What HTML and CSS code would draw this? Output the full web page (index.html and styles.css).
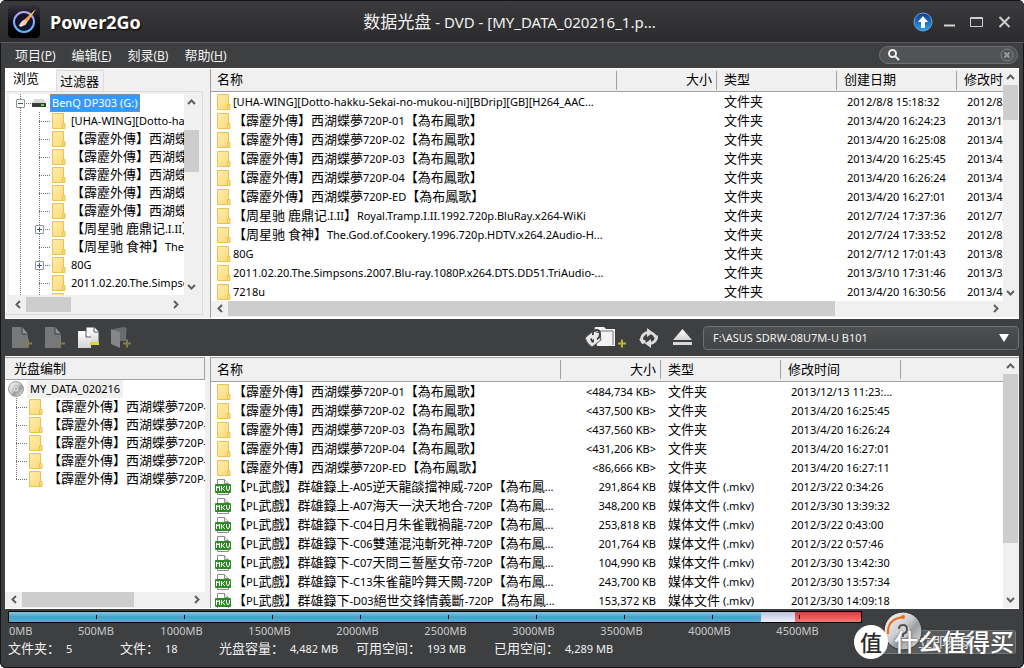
FILE: index.html
```html
<!DOCTYPE html>
<html lang="zh-CN">
<head>
<meta charset="utf-8">
<title>Power2Go</title>
<link rel="stylesheet" href="styles.css">
</head>
<body>
<svg class="defs" aria-hidden="true">
  <defs>
    <linearGradient id="g-folder" x1="0" y1="0" x2="1" y2="1"><stop offset="0" stop-color="#ffeeb0"/><stop offset="1" stop-color="#fbd873"/></linearGradient>
    <linearGradient id="g-page" x1="0" y1="0" x2="0" y2="1"><stop offset="0" stop-color="#fff"/><stop offset="1" stop-color="#d4d4d4"/></linearGradient>
    <linearGradient id="g-steel" x1="0" y1="0" x2="1" y2="1"><stop offset="0" stop-color="#fff"/><stop offset=".45" stop-color="#c9cbcd"/><stop offset=".6" stop-color="#9a9c9f"/><stop offset="1" stop-color="#f0f0f0"/></linearGradient>
    <linearGradient id="g-up" x1="0" y1="0" x2="0" y2="1"><stop offset="0" stop-color="#123f86"/><stop offset="1" stop-color="#2ba0f4"/></linearGradient>
    <linearGradient id="g-ring" x1="0" y1="0" x2="0" y2="1"><stop offset="0" stop-color="#b7a4e8"/><stop offset="1" stop-color="#58b7ff"/></linearGradient>
    <linearGradient id="g-flame" x1="1" y1="0" x2="0" y2="1"><stop offset="0" stop-color="#ffe66a"/><stop offset=".5" stop-color="#ff9a35"/><stop offset="1" stop-color="#f5e8e0"/></linearGradient>
    <linearGradient id="g-app" x1="0" y1="0" x2="0" y2="1"><stop offset="0" stop-color="#303039"/><stop offset=".6" stop-color="#07070c"/><stop offset="1" stop-color="#000"/></linearGradient>
  </defs>
  <symbol id="folder" viewBox="0 0 14 16"><path d="M.5.5h11v10h1.500v5H.5z" fill="url(#g-folder)" stroke="#e9c34f"/><path d="M10.500 15v-4.500h2.500" fill="none" stroke="#e9c34f"/></symbol>
  <symbol id="mkv" viewBox="0 0 16 16"><path d="M2.500 15.500V.5h7l4 4v11z" fill="#fff" stroke="#8c8c8c"/><path d="M9.500.5v4h4" fill="#eee" stroke="#8c8c8c"/><rect y="5" width="16" height="9" rx="1" fill="#2d8c25"/><path d="M1.500 12V7L3 9l1.500-2v5M6.500 7v5M10 7L7.500 9.500 10 12M11.500 7v3l1.500 2 1.500-2V7" fill="none" stroke="#fff"/></symbol>
  <symbol id="hdd" viewBox="0 0 14 9"><path d="M2.500 0h9L14 4H0z" fill="#d9d9d9"/><path d="M0 4h14v4H0z" fill="#3b3b3b"/><path d="M9 6h3" stroke="#3fe03f" stroke-width="2"/></symbol>
  <symbol id="disc" viewBox="0 0 16 16"><circle cx="8" cy="8" r="7.500" fill="url(#g-steel)" stroke="#9d9fa1"/><circle cx="8" cy="8" r="2.500" fill="#eee" stroke="#b5b5b5"/><circle cx="8" cy="8" r="1" fill="#888"/></symbol>
  <symbol id="up" viewBox="0 0 9 6"><path d="M1 5l3.500-3.500L8 5" fill="none" stroke="#606060" stroke-width="2"/></symbol>
  <symbol id="down" viewBox="0 0 9 6"><path d="M1 1l3.500 3.500L8 1" fill="none" stroke="#606060" stroke-width="2"/></symbol>
  <symbol id="left" viewBox="0 0 6 9"><path d="M5 1L1.500 4.500 5 8" fill="none" stroke="#606060" stroke-width="2"/></symbol>
  <symbol id="right" viewBox="0 0 6 9"><path d="M1 1l3.500 3.500L1 8" fill="none" stroke="#606060" stroke-width="2"/></symbol>
</svg>

<div class="app">
  <header class="titlebar">
    <div class="identity">
      <svg class="logo" viewBox="0 0 32 32"><rect width="32" height="32" rx="4" fill="url(#g-app)"/><circle cx="16" cy="16" r="10" fill="#10142c" stroke="url(#g-ring)" stroke-width="2"/><path d="M28 3L17 13q-5 3-6 7 3 2 6-2 2-1 4-4z" fill="url(#g-flame)"/><circle cx="16" cy="17" r="2" fill="none" stroke="#e9e4ff"/></svg>
      <h1 class="brand">Power2Go</h1>
    </div>
    <div class="doc-title"><span class="doc-han">数据光盘</span> - DVD - [MY_DATA_020216_1.p...</div>
    <div class="win-buttons">
      <button class="bare" aria-label="升级"><svg width="20" height="20" viewBox="0 0 20 20"><circle cx="10" cy="10" r="9" fill="url(#g-up)" stroke="#6ba4dc"/><path d="M10 4l5 6h-3v6H8v-6H5z" fill="#fff"/></svg></button>
      <button class="bare" aria-label="最小化"><svg width="11" height="12" viewBox="0 0 11 12"><path d="M0 9.500h11" stroke="#d0d0d0" stroke-width="2"/></svg></button>
      <button class="bare" aria-label="最大化"><svg width="13" height="12" viewBox="0 0 13 12"><path d="M.5 1.500h12v9H.5zM.5 2.500h12" fill="none" stroke="#d0d0d0"/></svg></button>
      <button class="bare" aria-label="关闭"><svg width="13" height="12" viewBox="0 0 13 12"><path d="M1.500 1l10 10M11.500 1l-10 10" stroke="#d0d0d0" stroke-width="2"/></svg></button>
    </div>
  </header>

  <nav class="menubar">
    <div class="menus">
      <button class="bare">项目<span class="key">(<u>P</u>)</span></button>
      <button class="bare">编辑<span class="key">(<u>E</u>)</span></button>
      <button class="bare">刻录<span class="key">(<u>B</u>)</span></button>
      <button class="bare">帮助<span class="key">(<u>H</u>)</span></button>
    </div>
    <div class="search">
      <svg width="12" height="12" viewBox="0 0 12 12"><circle cx="4.500" cy="4.500" r="3.500" fill="none" stroke="#eee" stroke-width="2"/><path d="M7 7l4 4" stroke="#eee" stroke-width="2"/></svg>
      <input type="text" aria-label="搜索">
      <button class="bare" aria-label="清除"><svg width="14" height="14" viewBox="0 0 14 14"><circle cx="7" cy="7" r="6" fill="none" stroke="#858688"/><path d="M4.500 4.500l5 5M9.500 4.500l-5 5" stroke="#98999b" stroke-width="2"/></svg></button>
    </div>
  </nav>

  <section class="panes">
    <div class="side browse">
      <div class="tabs" role="tablist">
        <button class="tab active" role="tab" aria-selected="true">浏览</button>
        <button class="tab" role="tab" aria-selected="false">过滤器</button>
      </div>
      <div class="tab-page">
        <div class="scroll-row">
          <ul class="tree" id="source-tree"></ul>
          <div class="vbar"><button class="bare" aria-label="向上"><svg width="9" height="6"><use href="#up"/></svg></button><div class="track"><i class="thumb tree-v"></i></div><button class="bare" aria-label="向下"><svg width="9" height="6"><use href="#down"/></svg></button></div>
        </div>
        <div class="hbar tree-bar"><button class="bare" aria-label="向左"><svg width="6" height="9"><use href="#left"/></svg></button><div class="track"><i class="thumb tree-h"></i></div><button class="bare" aria-label="向右"><svg width="6" height="9"><use href="#right"/></svg></button></div>
      </div>
    </div>
    <div class="list">
      <div class="scroll-row">
        <div class="table-box">
          <table>
            <colgroup><col class="c-name"><col class="c-size"><col class="c-type"><col class="c-date"><col></colgroup>
            <thead><tr><th>名称</th><th class="num">大小</th><th>类型</th><th>创建日期</th><th>修改时间</th></tr></thead>
            <tbody id="source-rows"></tbody>
          </table>
        </div>
        <div class="vbar"><button class="bare" aria-label="向上"><svg width="9" height="6"><use href="#up"/></svg></button><div class="track"><i class="thumb source-v"></i></div><button class="bare" aria-label="向下"><svg width="9" height="6"><use href="#down"/></svg></button></div>
      </div>
      <div class="hbar list-bar"><button class="bare" aria-label="向左"><svg width="6" height="9"><use href="#left"/></svg></button><div class="track"><i class="thumb source-h"></i></div><button class="bare" aria-label="向右"><svg width="6" height="9"><use href="#right"/></svg></button></div>
    </div>
  </section>

  <div class="toolbar">
    <button class="bare tool" aria-label="添加文件" disabled><svg width="21" height="22" viewBox="0 0 21 22"><path d="M0 0h10l6 7v14H0z" fill="#77787a"/><path d="M10 0v7h6" fill="#929394" stroke="#3e3f41"/><path d="M12 16.500h8M16 12.500v8" stroke="#847d4a" stroke-width="2"/></svg></button>
    <button class="bare tool" aria-label="移除" disabled><svg width="21" height="22" viewBox="0 0 21 22"><path d="M0 0h10l6 7v14H0z" fill="#77787a"/><path d="M10 0v7h6" fill="#929394" stroke="#3e3f41"/><path d="M12 16.500h8" stroke="#847d4a" stroke-width="2"/></svg></button>
    <button class="bare tool" aria-label="全部移除"><svg width="21" height="22" viewBox="0 0 21 22"><path d="M8 0h8l5 5v12H8z" fill="url(#g-page)" stroke="#4a4a4a"/><path d="M16 0v5h5" fill="#fff" stroke="#555"/><path d="M0 4h8l5 6v11H0z" fill="url(#g-page)"/><path d="M8 4v6h5" fill="#fff" stroke="#555"/><path d="M12 16.500h9" stroke="#ded62d" stroke-width="3"/></svg></button>
    <button class="bare tool" aria-label="新建文件夹" disabled><svg width="21" height="22" viewBox="0 0 21 22"><path d="M2 2L13 0q4 0 2 6v8H8z" fill="#6a6b6d"/><path d="M0 2l9 3v16l-9-4z" fill="#858688"/><path d="M12 16.500h8M16 12.500v8" stroke="#847d4a" stroke-width="2"/></svg></button>
    <span class="spacer"></span>
    <button class="bare" aria-label="加密"><svg width="41" height="22" viewBox="0 0 41 22"><path d="M9 4l1-4h9l2 2h9v17H12z" fill="#f2f2f2"/><path d="M14 4h14v14" fill="none" stroke="#777"/><path d="M0 11l8-7 7 2 1 7-9 7q-5-3-7-9z" fill="#e8e8e8" stroke="#555"/><path d="M8 8q-1-5 3-5t4 4-3 5" fill="none" stroke="#444" stroke-width="2"/><path d="M5 12l2-1v2l2-1v3l-2 1z" fill="#444"/><path d="M33 16.500h8M37 12.500v8" stroke="#c4b52e" stroke-width="2"/></svg></button>
    <button class="bare refresh" aria-label="刷新"><svg width="20" height="20" viewBox="0 0 20 20"><path d="M2.500 12.500A7 7 0 0 1 9 4.500M17.500 7.500A7 7 0 0 1 11 15.500" fill="none" stroke="#dcdcdc" stroke-width="3"/><path d="M8 0l6 4.500L8 9zM12 20l-6-4.500 6-4.500zM0 11l6 1 1 3-4 1z" fill="#dcdcdc"/><path d="M12 4q4 0 6 5l-3 1q0-3-4-4z" fill="#dcdcdc"/></svg></button>
    <button class="bare eject" aria-label="弹出"><svg width="19" height="17" viewBox="0 0 19 17"><path d="M9.500 0L19 11H0z" fill="url(#g-page)"/><path d="M0 14.500h19" stroke="#d8d8d8" stroke-width="3"/></svg></button>
    <div class="drive-box">
      <select class="drive" aria-label="刻录机"><option>F:\ASUS SDRW-08U7M-U B101</option></select>
      <svg class="caret" width="10" height="8" viewBox="0 0 10 8"><path d="M0 0h10L5 8z" fill="#fff"/></svg>
    </div>
  </div>

  <section class="panes lower">
    <div class="side disc-side">
      <h2 class="side-head">光盘编制</h2>
      <ul class="tree" id="disc-tree"></ul>
      <div class="hbar"><button class="bare" aria-label="向左"><svg width="6" height="9"><use href="#left"/></svg></button><div class="track"><i class="thumb disc-h"></i></div><button class="bare" aria-label="向右"><svg width="6" height="9"><use href="#right"/></svg></button></div>
    </div>
    <div class="list">
      <div class="scroll-row">
        <div class="table-box">
          <table class="disc-table">
            <colgroup><col class="d-name"><col class="c-size"><col class="c-type"><col class="c-date"><col></colgroup>
            <thead><tr><th>名称</th><th class="num">大小</th><th>类型</th><th>修改时间</th><th></th></tr></thead>
            <tbody id="disc-rows"></tbody>
          </table>
        </div>
        <div class="vbar"><button class="bare" aria-label="向上"><svg width="9" height="6"><use href="#up"/></svg></button><div class="track"><i class="thumb disc-v"></i></div><button class="bare" aria-label="向下"><svg width="9" height="6"><use href="#down"/></svg></button></div>
      </div>
    </div>
  </section>

  <footer class="status">
    <div class="usage">
      <div class="bar"><i class="used"></i><i class="free"></i><i class="over"></i></div>
      <div class="scale" id="scale"></div>
      <dl class="facts">
        <div><dt>文件夹<span class="colon">：</span></dt><dd>5</dd></div>
        <div><dt>文件<span class="colon">：</span></dt><dd>18</dd></div>
        <div><dt>光盘容量<span class="colon">：</span></dt><dd>4,482 MB</dd></div>
        <div><dt>可用空间<span class="colon">：</span></dt><dd>193 MB</dd></div>
        <div><dt>已用空间<span class="colon">：</span></dt><dd>4,289 MB</dd></div>
      </dl>
    </div>
    <div class="burn-area">
      <button class="burn">立即刻录</button>
      <svg class="burn-disc" width="40" height="40" viewBox="0 0 40 40"><circle cx="20" cy="20" r="19" fill="url(#g-steel)" stroke="#2c2c2c"/><path d="M5 23Q4 8 20 6" fill="none" stroke="#f26a1b" stroke-width="2"/><circle cx="20" cy="6" r="2" fill="#f26a1b"/><circle cx="20" cy="20" r="7" fill="#d5d5d5"/><path d="M16 18q0-4 4-4t4 4-4 5v3" fill="none" stroke="#555" stroke-width="2"/></svg>
      <div class="stamp"><span class="stamp-dot">值</span><span class="stamp-text">什么值得买</span></div>
    </div>
  </footer>
</div>
<script src="app.js"></script>
</body>
</html>
```
FILE: styles.css
```css
* { box-sizing: border-box; }

body {
  margin: 0;
  background: #fff;
  font: 11px/18px "Noto Sans", "Noto Sans CJK SC", sans-serif;
  color: #000;
}

ul, dl, dd, h1, h2 { margin: 0; padding: 0; }
ul { list-style: none; }
button, input, select { font: inherit; color: inherit; }
svg { display: block; flex: none; }

.defs { position: absolute; width: 0; height: 0; }
.bare { border: 0; padding: 0; background: none; }
.han { font-size: 13px; line-height: 1px; }

.app {
  display: grid;
  grid-template-rows: 43px 25px minmax(0, 251fr) 37px minmax(0, 253fr) 59px;
  height: 100vh;
  min-height: 400px;
  overflow: hidden;
  border-radius: 6px;
  background: #3e3f41;
  box-shadow: inset 0 0 0 1px #141416;
}

/* title bar */
.titlebar {
  display: grid;
  grid-template-columns: 1fr auto 1fr;
  align-items: center;
  padding: 0 13px 0 8px;
  background: linear-gradient(#3b3b3d, #2b2b2d);
  border-top: 1px solid #121214;
  border-bottom: 1px solid #5a5b5d;
  color: #fff;
}
.identity { display: flex; align-items: center; gap: 10px; }
.logo { width: 32px; height: 32px; }
.brand {
  font-size: 18px;
  line-height: 24px;
  font-weight: 700;
  text-shadow: 1px 1px 2px #000;
}
.doc-title { font-size: 15px; line-height: 24px; white-space: nowrap; color: #f0f0f0; }
.doc-han { font-size: 17px; line-height: 1px; }
.win-buttons { display: flex; justify-content: flex-end; align-items: center; gap: 15px; }
.win-buttons .bare:first-child { margin-right: -4px; }

/* menu bar */
.menubar { display: flex; justify-content: space-between; align-items: center; padding: 0 6px 2px 15px; color: #f2f2f2; }
.menus { display: flex; gap: 16px; font-size: 13px; }
.key { font-size: 12px; line-height: 1px; }
.search {
  display: flex;
  align-items: center;
  gap: 8px;
  width: 139px;
  height: 18px;
  padding: 0 3px 0 8px;
  border: 1px solid #6e6f71;
  border-radius: 9px;
  background: #525355;
}
.search input { flex: 1; min-width: 0; height: 14px; padding: 0; border: 0; outline: 0; background: transparent; }

/* panes */
.panes {
  display: grid;
  grid-template-columns: 200px minmax(0, 1fr);
  gap: 5px;
  margin: 0 5px;
  min-height: 0;
  background: #f0f0f0;
  border-top: 1px solid #fff;
  border-bottom: 1px solid #fff;
}
.side { display: flex; flex-direction: column; min-height: 0; min-width: 0; }
.tabs { display: flex; height: 22px; align-items: flex-end; font-size: 13px; }
.tab { height: 21px; padding: 0 4px 0 3px; border: 1px solid #dcdcdc; border-bottom: 0; background: #f0f0f0; line-height: 18px; }
.tab.active { height: 22px; width: 51px; padding: 0 8px 5px; text-align: left; border: 0; background: #fff; line-height: 16px; }
.tab-page {
  flex: 1;
  display: flex;
  flex-direction: column;
  min-height: 0;
  margin: 0 2px 3px 0;
  padding: 2px 2px 1px 3px;
  border: 1px solid #dcdcdc;
  border-left-color: #fff;
}
.scroll-row { flex: 1; display: flex; min-height: 0; }
.tree { flex: 1; min-width: 0; min-height: 0; overflow: hidden; background: #fff; }

.node { display: flex; height: 18px; align-items: center; white-space: nowrap; }
.node svg { width: 14px; height: 16px; }
.node .label { flex: 0 1 auto; min-width: 0; overflow: hidden; padding: 0 0 0 5px; }
.stem, .branch { flex: none; height: 18px; }
.stem { width: 20px; background: repeating-linear-gradient(#707070 0 1px, transparent 1px 2px) 11px 0 / 1px 100% no-repeat; }
.branch {
  display: flex;
  align-items: center;
  width: 23px;
  padding-left: 6px;
  background:
    repeating-linear-gradient(#707070 0 1px, transparent 1px 2px) 10px 0 / 1px 100% no-repeat,
    repeating-linear-gradient(90deg, #707070 0 1px, transparent 1px 2px) 10px 9px / 12px 1px no-repeat;
}
.branch.last { background-size: 1px 10px, 12px 1px; }
.root .stem {
  display: flex;
  align-items: center;
  width: 23px;
  padding-left: 7px;
  background:
    repeating-linear-gradient(#707070 0 1px, transparent 1px 2px) 11px 0 / 1px 100% no-repeat,
    repeating-linear-gradient(90deg, #707070 0 1px, transparent 1px 2px) 11px 9px / 12px 1px no-repeat;
}
.box { width: 9px; height: 9px; border: 1px solid #919191; border-radius: 1px; background:
    linear-gradient(#3355a0, #3355a0) 1px 3px / 5px 1px no-repeat #fff; }
.box.plus { background:
    linear-gradient(#3355a0, #3355a0) 1px 3px / 5px 1px no-repeat,
    linear-gradient(#3355a0, #3355a0) 3px 1px / 1px 5px no-repeat #fff; }
.root svg { height: 9px; }
.root .label { margin-left: 4px; padding: 0 1px; height: 18px; line-height: 16px; background: #3399ff; border: 1px dotted #d08030; color: #fff; }
.disc-root svg { width: 16px; height: 16px; margin-left: 3px; }
.disc-root .label { margin-left: 3px; padding: 0 3px; background: #f0f0f0; }
#disc-tree .branch { width: 24px; background-position: 11px 0, 11px 9px; }

.side-head { height: 23px; padding-left: 8px; border: 1px solid #a0a0a0; border-left-color: #f0f0f0; background: #f0f0f0; font-size: 13px; line-height: 20px; font-weight: 400; }

/* scroll bars */
.vbar, .hbar { flex: none; display: flex; background: #f0f0f0; }
.vbar { flex-direction: column; width: 16px; }
.hbar { height: 16px; }
.vbar .bare { display: grid; place-items: center; height: 16px; width: 15px; }
.hbar .bare { display: grid; place-items: center; width: 17px; height: 15px; }
.track { flex: 1; min-width: 0; min-height: 0; display: flex; }
.vbar .track { flex-direction: column; }
.thumb { display: block; flex: none; background: #cdcdcd; }
.vbar .thumb { width: 15px; }
.hbar .thumb { height: 15px; }
.tree-v { margin-top: 20px; height: 42px; }
.tree-h { width: 45px; }
.tree-bar { margin: 2px 16px 0 0; }
.source-v { height: 35px; }
.source-h { width: 80%; }
.list-bar { padding-right: 15px; margin-bottom: 1px; }
.disc-h { width: 112px; }
.disc-v { height: 169px; }

/* file lists */
.list { display: flex; flex-direction: column; min-width: 0; min-height: 0; border-left: 1px solid #a0a0a0; background: #fff; }
.table-box { flex: 1; min-width: 0; overflow: hidden; }
table { width: 100%; table-layout: fixed; border-collapse: separate; border-spacing: 0; }
.c-name { width: 406px; }
.d-name { width: 350px; }
.c-size { width: 100px; }
.c-type, .c-date { width: 120px; }
th, td { overflow: hidden; padding: 0 0 0 7px; text-align: left; white-space: nowrap; font-weight: 400; }
th:first-child, td:first-child { padding-left: 6px; }
th {
  height: 23px;
  line-height: 20px;
  padding-bottom: 2px;
  font-size: 13px;
  background: linear-gradient(#a0a0a0, #a0a0a0) 100% 2px / 1px 19px no-repeat #f0f0f0;
  border-bottom: 1px solid #a0a0a0;
}
th:last-child { background: #f0f0f0; }
td { height: 19px; line-height: 19px; }
.num { text-align: right; padding-right: 5px; }
.when { padding-left: 10px; }
.file { display: flex; align-items: center; height: 19px; }
.file svg { width: 14px; height: 16px; margin-right: 2px; }
.file .mkv { width: 16px; margin: 0 2px 0 -2px; }

/* toolbar */
.toolbar { display: flex; align-items: center; padding: 0 5px 0 12px; }
.tool { margin-right: 12px; }
.spacer { flex: 1; }
.refresh { margin-left: 13px; }
.eject { margin: 0 11px 0 14px; }
.drive-box { display: grid; align-items: center; width: 316px; }
.drive {
  grid-area: 1 / 1;
  appearance: none;
  width: 100%;
  height: 24px;
  padding: 0 30px 0 9px;
  border: 1px solid #6e6f71;
  border-radius: 4px;
  background: linear-gradient(#4e4f51, #434446);
  color: #f2f2f2;
}
.caret { grid-area: 1 / 1; justify-self: end; margin-right: 10px; pointer-events: none; }

.lower .list, .lower .side { border-top: 1px solid #a0a0a0; }
.lower .side-head { border-top: 0; height: 22px; }
.lower th { height: 24px; }
.disc-side { background: #fff; }

/* status area */
.status { display: flex; justify-content: space-between; padding: 2px 8px 0; color: #f2f2f2; }
.usage { flex: 1; min-width: 0; }
.bar { display: flex; height: 12px; border: 1px solid #000; }
.bar .used { flex: 754; background:
    repeating-linear-gradient(90deg, transparent 0 87px, #111 87px 88px) 0 3px / 100% 4px no-repeat,
    linear-gradient(#84c6e6, #4ba0c8 50%, #52aed6); }
.bar .free { flex: 34; background: linear-gradient(#bcc4dc, #eef0fa); }
.bar .over { flex: 66; background: linear-gradient(#111, #111) 4px 3px / 1px 4px no-repeat, linear-gradient(#d04040, #fa7474); }
.scale { display: flex; height: 16px; line-height: 16px; color: #c8c8c8; }
.scale span { flex: none; width: 88px; padding-right: 5px; text-align: center; }
.scale span:first-child { width: 44px; text-align: left; padding-left: 1px; }
.scale span:nth-child(2) { padding-right: 0; }
.facts { display: grid; grid-template-columns: 112px 99px 137px 138px auto; line-height: 19px; }
.facts div { display: flex; white-space: nowrap; }
.facts dt { font-size: 13px; margin-right: 6px; }
.colon { font-family: "Noto Sans CJK TC", sans-serif; line-height: 1px; }

.burn-area { position: relative; width: 154px; }
.burn {
  position: absolute;
  right: 0;
  top: 19px;
  width: 134px;
  height: 24px;
  padding-right: 12px;
  border: 1px solid #77787a;
  border-radius: 3px;
  background: #5a5b5d;
  color: #e8e8e8;
  font-size: 14px;
}
.burn-disc { position: absolute; left: 21px; top: 0; }
.stamp { position: absolute; right: 2px; top: 14px; display: flex; align-items: center; gap: 6px; color: #fff; white-space: nowrap; }
.stamp-dot { display: grid; place-items: center; width: 34px; height: 34px; border-radius: 50%; background: #fff; color: #2c2c2c; font-size: 22px; font-weight: 500; line-height: 30px; }
.stamp-text { font-size: 24px; line-height: 32px; font-weight: 500; text-shadow: 0 0 2px #444; }
```
FILE: app.js
```js
const hanRun = /([\u2e80-\u9fff\uff00-\uffef]+)/;

// Chinese runs are set larger than the Latin text beside them.
function mixed(text) {
  return text.split(hanRun).map((part, i) => {
    const safe = part.replace(/&/g, "&amp;").replace(/</g, "&lt;").replace(/>/g, "&gt;");
    return i % 2 ? `<span class="han">${safe}</span>` : safe;
  }).join("");
}

const icon = (id) => `<svg class="${id}"><use href="#${id}"/></svg>`;

const source = [
  ["[UHA-WING][Dotto-hakku-Sekai-no-mukou-ni][BDrip][GB][H264_AAC...", "2012/8/8 15:18:32", "2012/8/8"],
  ["【霹靂外傳】西湖蝶夢720P-01【為布鳳歌】", "2013/4/20 16:24:23", "2013/12/13"],
  ["【霹靂外傳】西湖蝶夢720P-02【為布鳳歌】", "2013/4/20 16:25:08", "2013/4/20"],
  ["【霹靂外傳】西湖蝶夢720P-03【為布鳳歌】", "2013/4/20 16:25:45", "2013/4/20"],
  ["【霹靂外傳】西湖蝶夢720P-04【為布鳳歌】", "2013/4/20 16:26:24", "2013/4/20"],
  ["【霹靂外傳】西湖蝶夢720P-ED【為布鳳歌】", "2013/4/20 16:27:01", "2013/4/20"],
  ["【周星驰 鹿鼎记.I.II】Royal.Tramp.I.II.1992.720p.BluRay.x264-WiKi", "2012/7/24 17:37:36", "2012/7/24"],
  ["【周星驰 食神】The.God.of.Cookery.1996.720p.HDTV.x264.2Audio-H...", "2012/7/24 17:33:52", "2012/8/24"],
  ["80G", "2012/7/12 17:01:43", "2013/8/12"],
  ["2011.02.20.The.Simpsons.2007.Blu-ray.1080P.x264.DTS.DD51.TriAudio-...", "2013/3/10 17:31:46", "2013/3/10"],
  ["7218u", "2013/4/20 16:30:56", "2013/4/20"]
];

const disc = [
  ["【霹靂外傳】西湖蝶夢720P-01【為布鳳歌】", "<484,734 KB>", "2013/12/13 11:23:..."],
  ["【霹靂外傳】西湖蝶夢720P-02【為布鳳歌】", "<437,500 KB>", "2013/4/20 16:25:45"],
  ["【霹靂外傳】西湖蝶夢720P-03【為布鳳歌】", "<437,560 KB>", "2013/4/20 16:26:24"],
  ["【霹靂外傳】西湖蝶夢720P-04【為布鳳歌】", "<431,206 KB>", "2013/4/20 16:27:01"],
  ["【霹靂外傳】西湖蝶夢720P-ED【為布鳳歌】", "<86,666 KB>", "2013/4/20 16:27:11"],
  ["【PL武戲】群雄籙上-A05逆天龍燄擋神威-720P【為布鳳...", "291,864 KB", "2012/3/22 0:34:26"],
  ["【PL武戲】群雄籙上-A07海天一決天地合-720P【為布鳳...", "348,200 KB", "2012/3/30 13:39:32"],
  ["【PL武戲】群雄籙下-C04日月朱雀戰禍龍-720P【為布鳳...", "253,818 KB", "2012/3/22 0:43:00"],
  ["【PL武戲】群雄籙下-C06雙蓮混沌斬死神-720P【為布鳳...", "201,764 KB", "2012/3/22 0:57:46"],
  ["【PL武戲】群雄籙下-C07天問三誓壓女帝-720P【為布鳳...", "104,990 KB", "2012/3/30 13:42:30"],
  ["【PL武戲】群雄籙下-C13朱雀龍吟舞天闕-720P【為布鳳...", "243,700 KB", "2012/3/30 13:57:34"],
  ["【PL武戲】群雄籙下-D03絕世交鋒情義斷-720P【為布鳳...", "153,372 KB", "2012/3/30 14:09:18"]
];

const fill = (id, html) => { document.getElementById(id).innerHTML = html; };
const file = (id, name) => `<td><div class="file">${icon(id)}<span>${mixed(name)}</span></div></td>`;

fill("source-rows", source.map(([name, made, changed]) =>
  `<tr>${file("folder", name)}<td></td><td>${mixed("文件夹")}</td><td class="when">${made}</td><td class="when">${changed}</td></tr>`
).join(""));

fill("disc-rows", disc.map(([name, size, changed]) => {
  const isFolder = size.startsWith("<");
  return `<tr>${file(isFolder ? "folder" : "mkv", name)}<td class="num">${mixed(size)}</td><td>${mixed(isFolder ? "文件夹" : "媒体文件 (.mkv)")}</td><td class="when">${changed}</td><td></td></tr>`;
}).join(""));

const expandable = [6, 8];
fill("source-tree",
  `<li class="node root"><span class="stem"><i class="box"></i></span>${icon("hdd")}<span class="label">BenQ DP303 (G:)</span></li>` +
  source.concat([["", "", ""]]).map(([name], i) =>
    `<li class="node"><span class="stem"></span><span class="branch">${expandable.includes(i) ? '<i class="box plus"></i>' : ""}</span>${icon("folder")}<span class="label">${mixed(name)}</span></li>`
  ).join(""));

fill("disc-tree",
  `<li class="node disc-root">${icon("disc")}<span class="label">MY_DATA_020216</span></li>` +
  disc.slice(0, 5).map(([name], i) =>
    `<li class="node"><span class="branch${i === 4 ? " last" : ""}"></span>${icon("folder")}<span class="label">${mixed(name)}</span></li>`
  ).join(""));

fill("scale", Array.from({ length: 10 }, (_, i) => `<span>${i * 500}MB</span>`).join(""));
```
